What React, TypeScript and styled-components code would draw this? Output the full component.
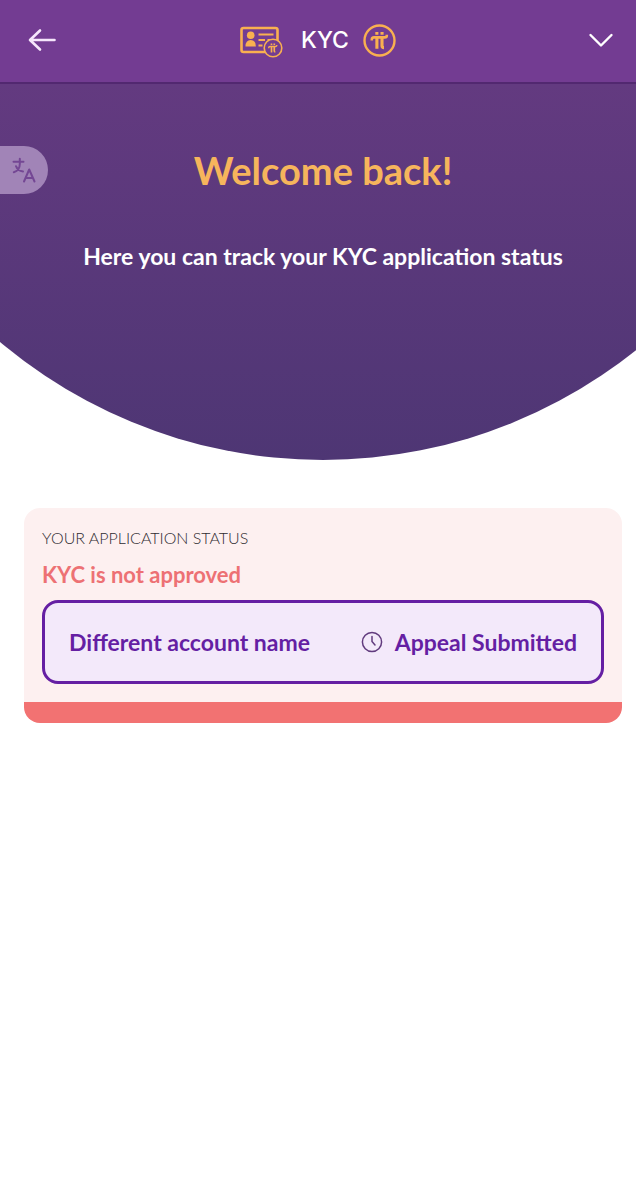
import React from "react";
import styled, { createGlobalStyle } from "styled-components";

const GlobalStyle = createGlobalStyle`
  * {
    box-sizing: border-box;
  }

  body {
    margin: 0;
    background: #ffffff;
    font-family: Lato, "Open Sans", sans-serif;
  }

  h1, h2, p {
    margin: 0;
  }
`;

const Header = styled.header`
  display: grid;
  grid-template-columns: 1fr auto 1fr;
  align-items: center;
  height: 84px;
  padding: 0 20px 2px;
  background: #733c92;
  border-bottom: 2px solid #522870;
`;

const IconButton = styled.button<{ $end?: boolean }>`
  display: flex;
  justify-self: ${(props) => (props.$end ? "end" : "start")};
  padding: 0;
  border: 0;
  background: none;
  color: #f6e6fc;
  cursor: pointer;
`;

const Brand = styled.div`
  display: flex;
  align-items: center;
  color: #f9b050;
`;

const BrandName = styled.span`
  margin: 0 14px 0 18px;
  color: #ffffff;
  font-family: Inter, sans-serif;
  font-size: 23px;
  font-weight: 500;
  line-height: 32px;
`;

const Hero = styled.section`
  position: relative;
  height: 376px;
  padding: 62px 14px 0 24px;
  background: linear-gradient(#633a80, #4e3674);
  clip-path: circle(501px at calc(50% + 5px) calc(100% - 501px));
  text-align: center;
`;

const TranslateButton = styled.button`
  position: absolute;
  top: 62px;
  left: 0;
  display: flex;
  align-items: center;
  width: 48px;
  height: 48px;
  padding: 0 0 0 12px;
  border: 0;
  border-radius: 0 24px 24px 0;
  background: #a184b7;
  color: #744794;
  cursor: pointer;
`;

const Title = styled.h1`
  color: #f6b55c;
  font-size: 38px;
  font-weight: 700;
  line-height: 48px;
`;

const Subtitle = styled.p`
  margin-top: 46px;
  color: #ffffff;
  font-size: 23px;
  font-weight: 700;
  line-height: 32px;
`;

const Main = styled.main`
  padding: 48px 14px 24px 24px;
`;

const StatusCard = styled.section`
  padding: 18px;
  border-bottom: 21px solid #f27272;
  border-radius: 16px;
  background: #fdf0f0;
`;

const StatusLabel = styled.p`
  color: #302c30;
  font-size: 16px;
  font-weight: 300;
  line-height: 24px;
`;

const StatusValue = styled.h2`
  margin: 8px 0;
  color: #ed7174;
  font-size: 22px;
  font-weight: 700;
  line-height: 34px;
`;

const AppealButton = styled.button`
  display: flex;
  align-items: center;
  justify-content: space-between;
  width: 100%;
  height: 84px;
  padding: 0 24px;
  border: 3px solid #651fa3;
  border-radius: 16px;
  background: #f3e9fa;
  color: #651fa3;
  font-family: inherit;
  font-size: 23px;
  font-weight: 700;
  line-height: 32px;
  cursor: pointer;
`;

const AppealState = styled.span`
  display: flex;
  align-items: center;
  gap: 12px;
`;

const PiGlyph = () => (
  <g fill="none" stroke="currentColor">
    <path d="M8.8 16.6v-1q0-2.2 2.2-2.2h10.8q2 0 2-2v-.6" strokeWidth="2.6" />
    <path d="M13.9 13.5v11.2M19 13.5v8.300q0 1.800 2 1.800" strokeWidth="3.1" />
    <path d="M12.3 9.300h3.100M17.500 9.300h3.100" strokeWidth="2.8" />
  </g>
);

const PiIcon = () => (
  <svg width="33" height="33" viewBox="0 0 33 33" aria-hidden="true">
    <circle cx="16.5" cy="16.5" r="15" fill="none" stroke="currentColor" strokeWidth="2.4" />
    <PiGlyph />
  </svg>
);

const IdCardIcon = () => (
  <svg width="43" height="36" viewBox="0 0 43 36" aria-hidden="true">
    <rect x="1.5" y="6" width="36" height="24" rx="2" fill="none" stroke="currentColor" strokeWidth="2.6" />
    <circle cx="10.7" cy="13.300" r="3.8" fill="currentColor" />
    <path d="M5.500 24.500q0-6.500 5.200-6.500t5.200 6.500z" fill="currentColor" />
    <path d="M18.500 12.500H33.500M18.500 18h6.500M27.500 18h6M18.500 23.500h4" stroke="currentColor" strokeWidth="2" />
    <circle cx="33" cy="26" r="8.8" fill="#733c92" stroke="currentColor" strokeWidth="1.6" />
    <g transform="translate(24 17.200) scale(.54)">
      <PiGlyph />
    </g>
  </svg>
);

const ArrowLeftIcon = () => (
  <svg width="40" height="24" viewBox="0 0 40 24" fill="none" stroke="currentColor" strokeWidth="2.6" strokeLinecap="round" strokeLinejoin="round" aria-hidden="true">
    <path d="M34.5 12H10.5M20 2.5 10 12l10 9.5" />
  </svg>
);

const ChevronIcon = () => (
  <svg width="30" height="20" viewBox="0 0 30 20" fill="none" stroke="#ffffff" strokeWidth="2.4" strokeLinecap="round" strokeLinejoin="round" aria-hidden="true">
    <path d="M4.5 5 15 15.5 25.5 5" />
  </svg>
);

const TranslateIcon = () => (
  <svg width="24" height="26" viewBox="0 0 24 26" fill="none" stroke="currentColor" strokeWidth="2" strokeLinecap="round" strokeLinejoin="round" aria-hidden="true">
    <path d="M1.5 4.700H11.500M7.800 1.700V7Q7.800 13.500 1.800 15.200M4 9.200Q5.800 14 11 14.500" />
    <path d="M12 24.500 17.200 12.500 22.500 24.500M13.600 21h7.300" />
  </svg>
);

const ClockIcon = () => (
  <svg width="22" height="22" viewBox="0 0 22 22" fill="none" stroke="#613b7e" strokeWidth="1.5" strokeLinecap="round" strokeLinejoin="round" aria-hidden="true">
    <circle cx="11" cy="11" r="9.6" />
    <path d="M11 5.5V10.5L14 14" />
  </svg>
);

const App = () => (
  <>
    <GlobalStyle />
    <Header>
      <IconButton type="button" aria-label="Back">
        <ArrowLeftIcon />
      </IconButton>
      <Brand>
        <IdCardIcon />
        <BrandName>KYC</BrandName>
        <PiIcon />
      </Brand>
      <IconButton type="button" aria-label="Open menu" $end>
        <ChevronIcon />
      </IconButton>
    </Header>
    <Hero>
      <TranslateButton type="button" aria-label="Change language">
        <TranslateIcon />
      </TranslateButton>
      <Title>Welcome back!</Title>
      <Subtitle>Here you can track your KYC application status</Subtitle>
    </Hero>
    <Main>
      <StatusCard>
        <StatusLabel>YOUR APPLICATION STATUS</StatusLabel>
        <StatusValue>KYC is not approved</StatusValue>
        <AppealButton type="button">
          <span>Different account name</span>
          <AppealState>
            <ClockIcon />
            Appeal Submitted
          </AppealState>
        </AppealButton>
      </StatusCard>
    </Main>
  </>
);

export default App;
